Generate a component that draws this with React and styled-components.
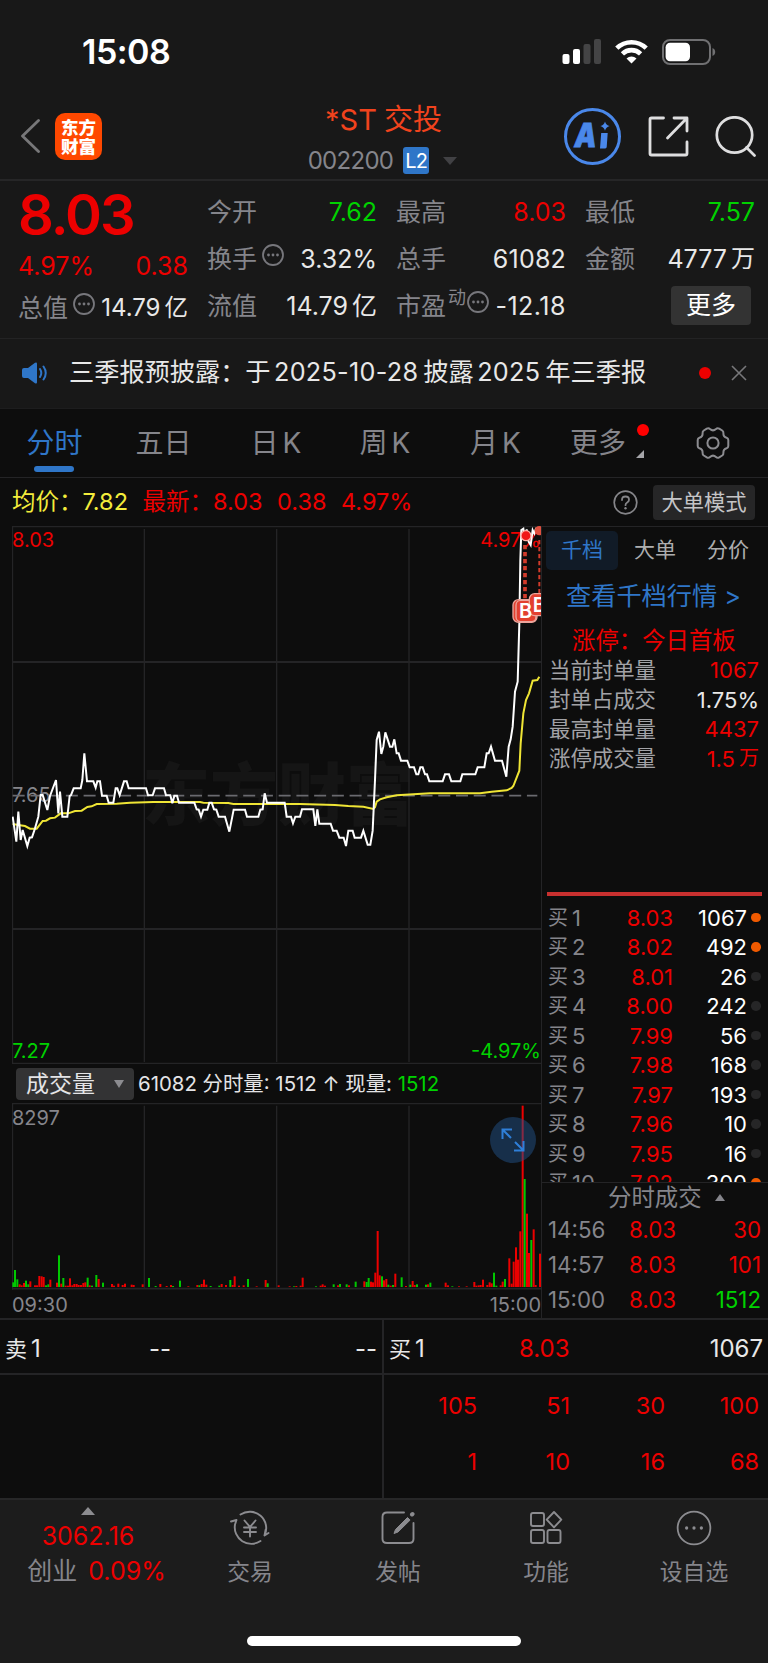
import React from 'react'
import styled, { createGlobalStyle, css } from 'styled-components'

const RED = '#ec0000'
const GREEN = '#00d200'
const BLUE = '#2f76c8'
const GRAY = '#85858b'
const WHITE = '#e8e8e8'
const LINE = '#242426'

const GlobalStyle = createGlobalStyle`
  * {
    box-sizing: border-box;
  }
  body {
    margin: 0;
    background: #0d0d0d;
    color: ${WHITE};
    font-family: Inter, "Noto Sans CJK SC", sans-serif;
    font-weight: 400;
    line-height: 1;
    white-space: nowrap;
  }
  svg {
    display: block;
    flex: none;
  }
`

const Screen = styled.div`
  width: 768px;
  height: 1663px;
  overflow: hidden;
  display: flex;
  flex-direction: column;
`

/* ---------- status bar + header ---------- */

const StatusBar = styled.div`
  height: 102px;
  padding: 1px 52px 0 82px;
  background: #181818;
  display: flex;
  align-items: center;
  justify-content: space-between;
`

const Clock = styled.div`
  font-size: 34px;
  font-weight: 600;
  letter-spacing: -0.5px;
  color: #fff;
`

const SignalGroup = styled.div`
  display: flex;
  align-items: center;
  gap: 14px;
`

const Header = styled.header`
  height: 79px;
  background: #181818;
  border-bottom: 2px solid #262627;
  display: grid;
  grid-template-columns: 300px 168px 300px;
`

const HeaderLeft = styled.div`
  display: flex;
  align-items: center;
  gap: 15px;
  padding: 0 0 9px 21px;
`

const Logo = styled.div`
  width: 47px;
  height: 47px;
  border-radius: 10px;
  background: #ff4800;
  color: #fff;
  font-family: "Noto Sans CJK SC", sans-serif;
  font-weight: 800;
  font-size: 17.5px;
  line-height: 19px;
  text-align: center;
  padding-top: 4px;
  white-space: normal;
`

const HeaderTitle = styled.div`
  display: flex;
  flex-direction: column;
  align-items: center;
`

const Name = styled.div`
  display: flex;
  gap: 7px;
  margin: 3px 0 0 -1px;
  font-size: 29px;
  color: #f1431d;
`

const Code = styled.div`
  display: flex;
  align-items: center;
  gap: 10px;
  margin: 13px 0 0 -3px;
  font-size: 24px;
  letter-spacing: -0.7px;
  color: ${GRAY};
`

const Level = styled.span`
  width: 26px;
  height: 27px;
  margin-right: 4px;
  border-radius: 3px;
  background: ${BLUE};
  color: #fff;
  font-size: 20px;
  line-height: 28px;
  text-align: center;
`

const Arrow = styled.span`
  width: 0;
  height: 0;
  border: ${p => p.w / 2}px solid transparent;
  ${p => p.up
    ? css`border-top: 0; border-bottom: ${p.h}px solid ${p.color};`
    : css`border-bottom: 0; border-top: ${p.h}px solid ${p.color};`}
`

const HeaderRight = styled.div`
  display: flex;
  align-items: center;
  justify-content: flex-end;
  gap: 26.5px;
  padding: 0 12px 9px 0;
`

/* ---------- quote ---------- */

const Quote = styled.section`
  height: 158px;
  background: #181818;
  border-bottom: 1px solid #232324;
  display: grid;
  grid-template-columns: 170px 170px 170px 170px;
  column-gap: 19px;
  padding-left: 18px;
`

const Column = styled.div`
  display: flex;
  flex-direction: column;
  padding-top: 8px;
`

const Price = styled.div`
  height: 52px;
  display: flex;
  align-items: center;
  font-size: 56px;
  font-weight: 600;
  letter-spacing: -2px;
  color: ${RED};
`

const Cell = styled.div`
  height: ${p => p.h || 47}px;
  display: flex;
  align-items: center;
  justify-content: space-between;
  font-size: 25px;
  color: ${GRAY};
`

const Label = styled.span`
  display: flex;
  align-items: center;
  gap: ${p => p.gap || 0}px;
`

const Value = styled.span`
  display: inline-flex;
  gap: 4px;
  font-size: ${p => p.size || 25}px;
  letter-spacing: ${p => p.ls || 0}px;
  color: ${p => p.color || WHITE};
`

const Sup = styled.small`
  font-size: 18px;
  margin: -17px 0 0 1px;
`

const Raised = styled.span`
  margin-top: -9px;
`

const MoreButton = styled.button`
  align-self: flex-end;
  width: 80px;
  height: 39px;
  margin: 3px 4px 0 0;
  padding: 0;
  border: 0;
  border-radius: 4px;
  background: #333;
  color: #fff;
  font: inherit;
  font-size: 25px;
`

const News = styled.section`
  height: 70px;
  background: #181818;
  border-bottom: 1px solid #1d1d1e;
  display: flex;
  align-items: center;
  padding: 0 21px 1px 22px;
`

const NewsText = styled.div`
  flex: 1;
  margin-left: 21px;
  font-size: 25.2px;
  span {
    margin: 0 5px 0 3.5px;
    letter-spacing: 0.3px;
  }
`

const Dot = styled.i`
  width: ${p => p.size}px;
  height: ${p => p.size}px;
  border-radius: 50%;
  background: ${p => p.color};
`

const NewsDot = styled(Dot)`
  margin-right: 20px;
`

/* ---------- period tabs ---------- */

const Tabs = styled.nav`
  height: 69px;
  border-bottom: 1px solid ${LINE};
  display: grid;
  grid-template-columns: 109px 109px 116px 102px 119px 103px 110px;
  justify-items: center;
`

const Tab = styled.div`
  position: relative;
  height: 68px;
  display: flex;
  align-items: center;
  gap: 4px;
  margin-right: ${p => p.shift || 0}px;
  padding-bottom: 1px;
  font-size: 28px;
  color: ${p => (p.active ? BLUE : GRAY)};
  ${p => p.active && css`
    &::after {
      content: '';
      position: absolute;
      left: 8px;
      bottom: 5px;
      width: 40px;
      height: 6px;
      border-radius: 3px;
      background: ${BLUE};
    }
  `}
`

const TabDot = styled(Dot)`
  position: absolute;
  top: 15px;
  right: -23px;
`

const Corner = styled.i`
  position: absolute;
  right: -18px;
  bottom: 19px;
  border-left: 8px solid transparent;
  border-bottom: 8px solid #a5a5a9;
`

const InfoRow = styled.div`
  height: 48px;
  display: flex;
  align-items: center;
  padding: 0 13px 0 12px;
  font-size: 23.5px;
  color: ${RED};
  span {
    margin-right: 14.5px;
  }
`

const Average = styled.span`
  color: #f3ec3b;
`

const Mode = styled.div`
  width: 102px;
  height: 35px;
  margin-left: 15px;
  border-radius: 4px;
  background: #262627;
  color: #c4c4c6;
  font-size: 21.3px;
  line-height: 34px;
  text-align: center;
`

const Spacer = styled.div`
  flex: 1;
`

/* ---------- chart area ---------- */

const Main = styled.main`
  height: 794px;
  display: grid;
  grid-template-columns: 530px 226px;
  padding-left: 12px;
  border-bottom: 2px solid ${LINE};
`

const Charts = styled.div`
  border-right: 1px solid ${LINE};
`

const VolumeHead = styled.div`
  height: 39px;
  display: flex;
  align-items: center;
  padding: 1px 0 0 4px;
  gap: 4px;
  font-size: 20.4px;
  color: #e4e4e6;
`

const Picker = styled.div`
  width: 118px;
  height: 32px;
  padding: 0 10px 0 10px;
  border-radius: 4px;
  background: #333334;
  font-size: 23px;
  display: flex;
  align-items: center;
  justify-content: space-between;
`

const Times = styled.div`
  height: 30px;
  display: flex;
  align-items: center;
  justify-content: space-between;
  font-size: 20px;
  color: ${GRAY};
`

const Side = styled.aside`
  display: flex;
  flex-direction: column;
  border-top: 1px solid ${LINE};
`

const SideTabs = styled.div`
  display: flex;
  gap: 1px;
  margin: 4px 0 0 4px;
`

const SideTab = styled.div`
  width: 72px;
  height: 39px;
  border-radius: 5px;
  font-size: 21px;
  line-height: 38px;
  text-align: center;
  color: ${p => (p.active ? BLUE : '#adadaf')};
  background: ${p => (p.active ? '#111b27' : 'transparent')};
`

const DepthLink = styled.div`
  margin: 13px 0 0 24px;
  height: 26px;
  font-size: 25.2px;
  line-height: 26px;
  color: ${BLUE};
`

const LimitTitle = styled.div`
  margin: 19px 0 2.5px 30px;
  height: 25px;
  font-size: 23.4px;
  line-height: 25px;
  color: ${RED};
`

const Stat = styled.div`
  height: 29.6px;
  display: flex;
  align-items: center;
  justify-content: space-between;
  padding: 0 9px 0 7px;
  font-size: 21.4px;
  color: #a2a2a6;
`

const Divider = styled.div`
  height: 4px;
  margin: 118px 6px 7px 5px;
  background: #c8302f;
`

const Book = styled.div`
  height: 280px;
  overflow: hidden;
  border-bottom: 1px solid ${LINE};
`

const BookRow = styled.div`
  height: 29.5px;
  display: grid;
  grid-template-columns: 50px 75px 74px 10px;
  align-items: center;
  padding-left: 6px;
  font-size: 22px;
  color: ${GRAY};
  > :nth-child(2), > :nth-child(3) {
    justify-self: end;
  }
  > :nth-child(4) {
    margin-left: 4px;
  }
`

const Rank = styled.span`
  display: flex;
  align-items: center;
  gap: 4px;
`

const Hanzi = styled.span`
  font-size: ${p => p.size || 20}px;
`

const TickHead = styled.div`
  height: 30px;
  display: flex;
  align-items: center;
  gap: 13px;
  padding-left: 66px;
  font-size: 23.4px;
  color: ${GRAY};
`

const Tick = styled.div`
  height: 35px;
  display: grid;
  grid-template-columns: 60px 68px 85px;
  align-items: center;
  padding-left: 6px;
  font-size: 22.3px;
  color: ${GRAY};
  > * {
    justify-self: end;
  }
`

/* ---------- order queue ---------- */

const Queue = styled.section`
  height: 178px;
  display: grid;
  grid-template-columns: 384px 384px;
  grid-template-rows: 55px 123px;
`

const QueueCell = styled.div`
  border-right: ${p => (p.left ? `2px solid ${LINE}` : '0')};
  border-bottom: ${p => (p.head ? `2px solid ${LINE}` : '0')};
`

const QueueHead = styled(QueueCell)`
  display: grid;
  grid-template-columns: ${p => p.cols};
  align-items: center;
  padding: 4px 5px 0 5px;
  font-size: 24px;
  > :last-child {
    justify-self: end;
  }
`

const Lots = styled(QueueCell)`
  display: grid;
  grid-template-columns: 93px 93px 95px 94px;
  grid-template-rows: 56px 56px;
  justify-items: end;
  align-items: center;
  padding-top: 3px;
  font-size: 23.5px;
  color: ${RED};
`

/* ---------- bottom bar ---------- */

const BottomBar = styled.footer`
  flex: 1;
  background: #1c1c1c;
  border-top: 2px solid #272728;
  display: flex;
  flex-direction: column;
  align-items: center;
`

const Actions = styled.div`
  width: 768px;
  height: 136px;
  display: grid;
  grid-template-columns: 176px 148px 148px 148px 148px;
`

const Action = styled.div`
  display: flex;
  flex-direction: column;
  align-items: center;
  padding-top: 10px;
  font-size: 22.8px;
  color: ${GRAY};
  svg {
    margin-bottom: 15px;
  }
`

const IndexBox = styled.div`
  display: flex;
  flex-direction: column;
  align-items: center;
  padding-top: 7px;
  font-size: 25px;
  color: ${RED};
`

const IndexValue = styled.div`
  margin-top: 9px;
`

const IndexRow = styled.div`
  display: flex;
  gap: 11px;
  margin: 10px 0 0 17px;
`

const HomeIndicator = styled.div`
  width: 274px;
  height: 10px;
  border-radius: 5px;
  background: #fff;
`

/* ---------- icons ---------- */

const SignalIcon = () => (
  <svg width="39" height="25" viewBox="0 0 39 25">
    <rect x="0.5" y="15" width="7" height="10" rx="2" fill="#fff" />
    <rect x="11" y="10" width="7" height="15" rx="2" fill="#fff" />
    <rect x="21.5" y="5" width="7" height="20" rx="2" fill="#444445" />
    <rect x="32" y="0" width="7" height="25" rx="2" fill="#444445" />
  </svg>
)

const WifiIcon = () => (
  <svg width="33" height="25" viewBox="0 0 33 25">
    <g fill="none" stroke="#fff" strokeWidth="4.6">
      <path d="M1.8 9.2a21 21 0 0 1 29.4 0" />
      <path d="M7.4 14.8a13 13 0 0 1 18.2 0" />
    </g>
    <path d="M16.5 24.6l-5-5a7.3 7.3 0 0 1 10 0z" fill="#fff" />
  </svg>
)

const BatteryIcon = () => (
  <svg width="54" height="26" viewBox="0 0 54 26">
    <rect x="1" y="1" width="47" height="24" rx="7" fill="none" stroke="#707072" strokeWidth="2" />
    <rect x="3.6" y="3.8" width="24.4" height="18.4" rx="4.5" fill="#fff" />
    <path d="M50.5 9c3.6 1.2 3.6 6.8 0 8z" fill="#707072" />
  </svg>
)

const BackIcon = () => (
  <svg width="19" height="34" viewBox="0 0 19 34">
    <path d="M17.5 1.5L1.5 17l16 15.5" fill="none" stroke="#777779" strokeWidth="2.8" strokeLinecap="round" strokeLinejoin="round" />
  </svg>
)

const AiIcon = () => (
  <svg width="57" height="57" viewBox="0 0 57 57">
    <circle cx="28.5" cy="28.5" r="27" fill="none" stroke="#4a88ea" strokeWidth="3" />
    <text x="10.5" y="39" fontFamily="Inter" fontWeight="900" fontStyle="italic" fontSize="33" textLength="22" lengthAdjust="spacingAndGlyphs" stroke="#4a88ea" strokeWidth="0.8" fill="#4a88ea">A</text>
    <path d="M37.2 25h6.5l-1 14q-.1 1.400-1.500 1.400h-5.200z" fill="#4a88ea" />
    <path d="M41 13.500q1 3.800 4.600 4.600q-3.600 1-4.600 4.600q-1-3.600-4.600-4.600q3.600-.8 4.600-4.600z" fill="#4a88ea" />
  </svg>
)

const ShareIcon = () => (
  <svg width="41" height="41" viewBox="0 0 41 41">
    <g fill="none" stroke="#dededf" strokeWidth="2.8" strokeLinecap="round" strokeLinejoin="round">
      <path d="M15.5 2H3.5q-1.500 0-1.500 1.500v34q0 1.500 1.500 1.500h34q1.500 0 1.500-1.500V26" />
      <path d="M26 2h13v13M38.500 2.500L19.500 22" />
    </g>
  </svg>
)

const SearchIcon = () => (
  <svg width="41" height="41" viewBox="0 0 41 41">
    <g fill="none" stroke="#dededf" strokeWidth="2.7" strokeLinecap="round">
      <circle cx="19.5" cy="19" r="17.7" />
      <path d="M31.5 31.5l8 8" />
    </g>
  </svg>
)

const DotsIcon = ({ size = 22, sw = 1.8, r = 1.4, color = '#77777c' }) => (
  <svg width={size} height={size} viewBox="0 0 22 22">
    <circle cx="11" cy="11" r="10" fill="none" stroke={color} strokeWidth={sw} />
    <g fill={color}>
      <circle cx="6.5" cy="11" r={r} />
      <circle cx="11" cy="11" r={r} />
      <circle cx="15.5" cy="11" r={r} />
    </g>
  </svg>
)

const SpeakerIcon = () => (
  <svg width="26" height="22" viewBox="0 0 26 22">
    <path d="M2 6h4l7-5.200q2-1 2 1v18.400q0 2-2 1L6 16H2q-2 0-2-2V8q0-2 2-2z" fill={BLUE} />
    <g fill="none" stroke={BLUE} strokeWidth="2" strokeLinecap="round">
      <path d="M18 7q2.600 4 0 8M21.500 4.500q4.500 6.500 0 13" />
    </g>
  </svg>
)

const CloseIcon = () => (
  <svg width="16" height="16" viewBox="0 0 16 16">
    <path d="M1 1l14 14M15 1L1 15" stroke="#77777a" strokeWidth="1.6" />
  </svg>
)

const GearIcon = () => (
  <svg width="34" height="34" viewBox="0 0 34 34">
    <g fill="none" stroke="#8c8c90" strokeWidth="2" strokeLinejoin="round">
      <path d="M10.800 2.600q1.800-1 3.200.4q3 2.800 6 0q1.400-1.400 3.200-.4l3 1.900q1.400 1 1.200 2.700q-.2 3.600 3.200 4.600q1.700.6 1.700 2.200v6q0 1.600-1.700 2.200q-3.400 1-3.200 4.600q.2 1.700-1.200 2.700l-3 1.900q-1.800 1-3.200-.4q-3-2.800-6 0q-1.400 1.400-3.200.4l-3-1.900q-1.400-1-1.200-2.700q.2-3.600-3.200-4.600q-1.700-.6-1.700-2.200v-6q0-1.600 1.700-2.200q3.400-1 3.200-4.600q-.2-1.700 1.200-2.700z" />
      <circle cx="17" cy="17" r="5.600" />
    </g>
  </svg>
)

const HelpIcon = () => (
  <svg width="25" height="25" viewBox="0 0 25 25">
    <circle cx="12.5" cy="12.5" r="11.3" fill="none" stroke="#858589" strokeWidth="1.7" />
    <path d="M9 10q0-3.500 3.500-3.500t3.500 3.200q0 1.700-1.800 2.800q-1.700 1-1.700 2.700" fill="none" stroke="#858589" strokeWidth="1.8" strokeLinecap="round" />
    <circle cx="12.5" cy="18.200" r="1.200" fill="#858589" />
  </svg>
)

const TradeIcon = () => (
  <svg width="40" height="36" viewBox="0 0 40 36">
    <g fill="none" stroke="#8c8c90" strokeWidth="1.9" strokeLinecap="round" strokeLinejoin="round">
      <path d="M10.500 4.500A16.500 16.500 0 0 1 34.500 25.500l4-2.500M34.500 25.500l1.200-6" />
      <path d="M1 11.500l5.500-1.500l-1.500 4.500A16.500 16.500 0 0 0 30.500 31" />
      <path d="M14.500 10.500l5.500 6.500l5.500-6.500M20 17V26.500M14 17.500h12M14 22h12" />
    </g>
  </svg>
)

const PostIcon = () => (
  <svg width="34" height="36" viewBox="0 0 34 36">
    <g fill="none" stroke="#8c8c90" strokeWidth="1.9" strokeLinecap="round">
      <path d="M23 2.500H6Q1.500 2.500 1.500 7v22q0 4 4.500 4h22q4.500 0 4.500-4V13" />
      <path d="M31 4.500l.5-.5" strokeWidth="4" />
    </g>
    <path d="M13 23.500l1.500-4L26.500 7.500l2.600 2.600L17 22z" fill="#8c8c90" stroke="#8c8c90" strokeLinejoin="round" />
  </svg>
)

const GridIcon = () => (
  <svg width="34" height="36" viewBox="0 0 34 36">
    <g fill="none" stroke="#8c8c90" strokeWidth="1.9" strokeLinejoin="round">
      <rect x="2" y="3" width="13" height="13" rx="2" />
      <rect x="2" y="20" width="13" height="13" rx="2" />
      <rect x="18.5" y="20" width="13" height="13" rx="2" />
      <path d="M25 2l7.300 7.700L25 17.400l-7.300-7.700z" />
    </g>
  </svg>
)

/* ---------- charts ---------- */

const ChartBox = styled.div`
  position: relative;
  height: ${p => p.h}px;
`

const Plot = styled.svg`
  position: relative;
`

const ChartText = styled.span`
  position: absolute;
  font-size: 20px;
  color: ${p => p.color};
  ${p => (p.right ? 'right: 0;' : 'left: 0;')}
  top: ${p => p.top}px;
`

const Watermark = styled.div`
  position: absolute;
  left: 130px;
  top: 235px;
  font-size: 68px;
  font-weight: 900;
  color: #151515;
`

const Expand = styled.div`
  position: absolute;
  left: 478px;
  top: 14px;
  width: 46px;
  height: 46px;
  border-radius: 50%;
  background: rgba(34, 82, 136, 0.5);
  display: grid;
  place-items: center;
`

// three units per pixel
const PRICE_LINE = `
38,890 49,965 55,875 62,960 68,930 82,978 89,953 96,952 105,925 115,890 122,825 128,825
142,870 150,828 168,780 175,880 180,815 187,890 202,890 209,828 213,825 221,805 242,805
247,780 253,700 261,784 280,784 287,803 292,784 300,784 306,827 320,827 326,848 340,848
347,805 352,805 359,825 372,784 380,784 386,805 438,805 444,826 458,826 465,805 492,805
498,826 511,826 517,850 523,827 531,827 537,848 583,848 590,868 596,869 603,890 610,869
622,869 628,848 635,848 642,868 649,869 656,890 675,890 688,935 701,869 735,869 741,890
775,890 781,869 788,868 794,820 801,848 854,848 860,890 873,890 879,910 886,890 900,890
906,868 940,868 946,918 952,868 958,911 992,911 999,932 1010,932 1018,953 1031,953
1038,978 1045,932 1058,932 1064,953 1083,953 1090,932 1103,974 1111,974 1118,932 1125,780
1130,660 1137,635 1144,702 1150,680 1156,637 1170,680 1177,680 1183,658 1190,700 1196,700
1203,722 1222,722 1229,742 1242,742 1249,763 1255,763 1261,742 1268,742 1275,763 1281,763
1288,784 1328,784 1335,763 1347,763 1354,784 1381,784 1387,763 1426,763 1433,742 1453,742
1460,700 1466,700 1473,680 1485,722 1506,722 1519,770 1526,680 1532,658 1538,620 1545,515
1553,485 1558,310 1561,120 1564,30 1570,26 1575,62 1580,28 1586,65 1592,75 1598,30 1603,40
1608,26 1624,24`

const AVG_LINE = `
38,912 55,915 75,918 90,926 110,926 128,903 138,902 150,895 165,893 182,880 205,880
225,873 245,872 262,861 275,859 290,852 350,851 390,848 460,846 600,846 610,848 685,849
700,852 900,852 1005,855 1045,858 1090,860 1120,867 1125,862 1130,845 1140,838 1160,832
1190,826 1290,820 1440,820 1475,815 1520,811 1535,804 1540,798 1558,752 1562,670
1570,580 1578,540 1587,520 1598,482 1612,480 1618,470`

const PriceChart = () => (
  <ChartBox h={538}>
    <Watermark>东方财富</Watermark>
    <ChartText color={RED} top={3.5}>8.03</ChartText>
    <ChartText color={RED} top={3.5} right>4.97%</ChartText>
    <ChartText color={GRAY} top={259}>7.65</ChartText>
    <ChartText color={GREEN} top={515}>7.27</ChartText>
    <ChartText color={GREEN} top={515} right>-4.97%</ChartText>
    <Plot width="529" height="538" viewBox="36 18 1587 1614">
      <g stroke={LINE} strokeWidth="4" fill="none">
        <path d="M36 20H1623M36 1630H1623" />
        <path d="M36 426H1623M36 1227H1623" strokeWidth="6" />
        <path d="M37.500 18V1632M433 27V1626M830 27V1626M1227 27V1626" />
      </g>
      <path d="M38 827H1612" stroke="#6a6a6f" strokeWidth="5" strokeDasharray="36 17.200" />
      <polyline points={AVG_LINE} fill="none" stroke="#efe535" strokeWidth="6" />
      <polyline points={PRICE_LINE} fill="none" stroke="#fff" strokeWidth="6" />
      <path d="M1575 75V240" stroke="#d23b2b" strokeWidth="11" strokeDasharray="13 8" />
      <path d="M1618 60V225" stroke="#d23b2b" strokeWidth="6" strokeDasharray="13 8" />
      <circle cx="1578" cy="47" r="15" fill="#f01818" stroke="#ffb0a8" strokeWidth="4" />
      <circle cx="1618" cy="32" r="14" fill="#e0503f" />
      <g fill="#e2402f" stroke="#eba59c" strokeWidth="4">
        <rect x="1539" y="239" width="72" height="68" rx="16" />
        <rect x="1548" y="241" width="60" height="64" rx="14" />
        <rect x="1588" y="221" width="70" height="66" rx="16" />
      </g>
      <g fill="#fff" fontFamily="Inter" fontSize="60" fontWeight="600">
        <text x="1557" y="294">B</text>
        <text x="1598" y="275">B</text>
      </g>
    </Plot>
  </ChartBox>
)

// [x, height, up]
const BARS = [
  [40, 14, 0], [45, 51, 0], [52, 23, 0], [59, 8, 1], [65, 5, 1], [72, 12, 1], [78, 19, 0], [85, 8, 0],
  [91, 17, 1], [105, 5, 1], [111, 5, 1], [118, 33, 1], [125, 32, 1], [131, 30, 1], [138, 5, 0], [145, 8, 0],
  [151, 22, 1], [171, 13, 1], [177, 95, 0], [184, 10, 1], [190, 27, 0], [197, 4, 1], [204, 4, 1], [210, 26, 1],
  [217, 5, 1], [223, 9, 1], [230, 9, 1], [236, 6, 1], [243, 6, 1], [250, 12, 1], [256, 14, 1], [263, 28, 0],
  [269, 5, 1], [276, 4, 0], [289, 36, 0], [296, 24, 1], [309, 13, 0], [336, 9, 1], [342, 4, 1], [355, 10, 1],
  [368, 6, 1], [375, 10, 1], [395, 7, 1], [401, 6, 1], [428, 8, 1], [447, 27, 0], [467, 3, 0], [481, 9, 1],
  [500, 3, 1], [513, 6, 1], [519, 3, 0], [540, 19, 0], [565, 2, 1], [592, 6, 1], [598, 5, 0], [605, 9, 1],
  [612, 22, 1], [619, 7, 1], [632, 3, 0], [658, 4, 0], [665, 9, 1], [678, 6, 1], [691, 21, 0], [698, 6, 1],
  [704, 32, 1], [717, 4, 1], [731, 5, 1], [744, 24, 0], [770, 2, 1], [797, 21, 1], [803, 11, 0], [836, 5, 1],
  [869, 2, 1], [882, 2, 0], [889, 3, 1], [902, 4, 1], [908, 28, 1], [948, 2, 0], [962, 4, 1], [968, 8, 1],
  [975, 4, 1], [1001, 8, 0], [1014, 5, 1], [1020, 9, 0], [1040, 8, 0], [1047, 5, 1], [1067, 16, 0], [1093, 17, 1],
  [1100, 15, 0], [1106, 27, 0], [1113, 16, 1], [1119, 14, 1], [1126, 43, 1], [1133, 168, 1], [1139, 35, 1],
  [1146, 32, 0], [1152, 20, 1], [1159, 24, 1], [1165, 7, 0], [1172, 4, 1], [1179, 6, 0], [1186, 40, 1],
  [1205, 29, 0], [1218, 3, 1], [1231, 7, 0], [1238, 18, 1], [1244, 6, 1], [1251, 8, 0], [1278, 7, 0], [1284, 8, 1],
  [1291, 13, 0], [1337, 13, 1], [1344, 5, 1], [1357, 2, 0], [1377, 2, 1], [1400, 2, 1], [1423, 15, 1],
  [1429, 4, 1], [1436, 5, 1], [1442, 6, 1], [1449, 22, 1], [1462, 6, 1], [1469, 14, 1], [1475, 11, 1],
  [1482, 43, 0], [1489, 4, 0], [1502, 5, 1], [1508, 16, 1], [1515, 24, 0], [1528, 86, 1], [1535, 10, 1],
  [1541, 76, 1], [1548, 119, 1], [1554, 82, 1], [1561, 167, 1], [1568, 544, 1], [1574, 324, 0], [1581, 220, 1],
  [1587, 102, 1], [1594, 141, 0], [1601, 173, 1], [1607, 6, 1], [1620, 100, 1],
]

const VolumeChart = () => (
  <ChartBox h={187}>
    <Plot width="529" height="187" viewBox="36 0 1587 561">
      <g stroke={LINE} strokeWidth="5" fill="none">
        <path d="M36 1H1623M36 557H1623" />
        <path d="M37.500 0V560M433 8V554M830 8V554M1227 8V554" strokeWidth="4" />
      </g>
      {BARS.map(([x, h, up]) => (
        <rect key={x} x={x - 3} y={552 - h} width="6" height={h} fill={up ? RED : '#00c800'} />
      ))}
    </Plot>
    <ChartText color={GRAY} top={5}>8297</ChartText>
    <Expand>
      <svg width="24" height="24" viewBox="0 0 24 24">
        <path d="M1.500 11V1.500H11M1.500 1.500l8.500 8.500M22.500 13v9.500H13M22.500 22.500l-8.500-8.500" fill="none" stroke="#2f7fd8" strokeWidth="2" />
      </svg>
    </Expand>
  </ChartBox>
)

/* ---------- data ---------- */

const stats = [
  ['当前封单量', '1067', '', RED],
  ['封单占成交', '1.75%', '', WHITE],
  ['最高封单量', '4437', '', RED],
  ['涨停成交量', '1.5', '万', RED],
]

const bids = [
  ['8.03', 1067, true], ['8.02', 492, true], ['8.01', 26], ['8.00', 242], ['7.99', 56],
  ['7.98', 168], ['7.97', 193], ['7.96', 10], ['7.95', 16], ['7.92', 300, true],
]

const ticks = [
  ['14:56', '8.03', 30, RED],
  ['14:57', '8.03', 101, RED],
  ['15:00', '8.03', 1512, GREEN],
]

const lots = [105, 51, 30, 100, 1, 10, 16, 68]

const App = () => (
  <>
    <GlobalStyle />
    <Screen>
      <StatusBar>
        <Clock>15:08</Clock>
        <SignalGroup>
          <SignalIcon />
          <WifiIcon />
          <BatteryIcon />
        </SignalGroup>
      </StatusBar>

      <Header>
        <HeaderLeft>
          <BackIcon />
          <Logo>东方<br />财富</Logo>
        </HeaderLeft>
        <HeaderTitle>
          <Name>*ST<span>交投</span></Name>
          <Code>
            002200<Level>L2</Level>
            <Arrow w={14} h={8} color="#414144" />
          </Code>
        </HeaderTitle>
        <HeaderRight>
          <AiIcon />
          <ShareIcon />
          <SearchIcon />
        </HeaderRight>
      </Header>

      <Quote>
        <Column>
          <Price>8.03</Price>
          <Cell h={50}>
            <Value color={RED}>4.97%</Value>
            <Value color={RED}>0.38</Value>
          </Cell>
          <Cell h={34}>
            <Label gap={5}>总值<Raised><DotsIcon /></Raised></Label>
            <Value size={24}>14.79<Hanzi size={23.5}>亿</Hanzi></Value>
          </Cell>
        </Column>
        <Column>
          <Cell><Label>今开</Label><Value color={GREEN}>7.62</Value></Cell>
          <Cell>
            <Label gap={5}>换手<Raised><DotsIcon /></Raised></Label>
            <Value>3.32%</Value>
          </Cell>
          <Cell><Label>流值</Label><Value>14.79<Hanzi size={25}>亿</Hanzi></Value></Cell>
        </Column>
        <Column>
          <Cell><Label>最高</Label><Value color={RED}>8.03</Value></Cell>
          <Cell><Label>总手</Label><Value ls={0.2}>61082</Value></Cell>
          <Cell>
            <Label gap={1}>市盈<Sup>动</Sup><Raised><DotsIcon /></Raised></Label>
            <Value ls={0.5}>-12.18</Value>
          </Cell>
        </Column>
        <Column>
          <Cell><Label>最低</Label><Value color={GREEN}>7.57</Value></Cell>
          <Cell><Label>金额</Label><Value>4777<Hanzi size={24}>万</Hanzi></Value></Cell>
          <MoreButton>更多</MoreButton>
        </Column>
      </Quote>

      <News>
        <SpeakerIcon />
        <NewsText>三季报预披露：于<span>2025-10-28</span>披露<span>2025</span>年三季报</NewsText>
        <NewsDot size={12} color={RED} />
        <CloseIcon />
      </News>

      <Tabs>
        <Tab active>分时</Tab>
        <Tab>五日</Tab>
        <Tab>日<span>K</span></Tab>
        <Tab>周<span>K</span></Tab>
        <Tab>月<span>K</span></Tab>
        <Tab shift={17}>
          更多
          <TabDot size={12} color="#ff0000" />
          <Corner />
        </Tab>
        <Tab><GearIcon /></Tab>
      </Tabs>

      <InfoRow>
        <Average>均价：7.82</Average>
        <span>最新：8.03</span>
        <span>0.38</span>
        <span>4.97%</span>
        <Spacer />
        <HelpIcon />
        <Mode>大单模式</Mode>
      </InfoRow>

      <Main>
        <Charts>
          <PriceChart />
          <VolumeHead>
            <Picker>成交量<Arrow w={10} h={8} color="#8c8c90" /></Picker>
            <div>61082 分时量: 1512 ↑ 现量: <Value size={20.4} color={GREEN}>1512</Value></div>
          </VolumeHead>
          <VolumeChart />
          <Times><span>09:30</span><span>15:00</span></Times>
        </Charts>

        <Side>
          <SideTabs>
            <SideTab active>千档</SideTab>
            <SideTab>大单</SideTab>
            <SideTab>分价</SideTab>
          </SideTabs>
          <DepthLink>查看千档行情 &gt;</DepthLink>
          <LimitTitle>涨停：今日首板</LimitTitle>
          {stats.map(([label, value, unit, color]) => (
            <Stat key={label}>
              {label}
              <Value size={22} color={color}>{value}{unit && <Hanzi>{unit}</Hanzi>}</Value>
            </Stat>
          ))}
          <Divider />
          <Book>
            {bids.map(([price, qty, hot], i) => (
              <BookRow key={price}>
                <Rank><Hanzi>买</Hanzi>{i + 1}</Rank>
                <Value size={22} color={RED}>{price}</Value>
                <Value size={22} color="#fff">{qty}</Value>
                <Dot size={9.5} color={hot ? '#f05a00' : '#262627'} />
              </BookRow>
            ))}
          </Book>
          <TickHead>分时成交<Arrow up w={10} h={7} color="#85858b" /></TickHead>
          {ticks.map(([time, price, qty, color]) => (
            <Tick key={time}>
              <Time>{time}</Time>
              <Value size={22.3} color={RED}>{price}</Value>
              <Value size={22.3} color={color}>{qty}</Value>
            </Tick>
          ))}
        </Side>
      </Main>

      <Queue>
        <QueueHead left head cols="144px 1fr 1fr">
          <Rank><Hanzi size={22}>卖</Hanzi>1</Rank>
          <span>--</span>
          <span>--</span>
        </QueueHead>
        <QueueHead head cols="130px 1fr 1fr">
          <Rank><Hanzi size={22}>买</Hanzi>1</Rank>
          <Value size={24} color={RED}>8.03</Value>
          <span>1067</span>
        </QueueHead>
        <QueueCell left />
        <Lots>
          {lots.map(n => <span key={n}>{n}</span>)}
        </Lots>
      </Queue>

      <BottomBar>
        <Actions>
          <IndexBox>
            <Arrow up w={14} h={8} color="#8c8c90" />
            <IndexValue>3062.16</IndexValue>
            <IndexRow>
              <Value size={25} color={GRAY}>创业</Value>
              0.09%
            </IndexRow>
          </IndexBox>
          <Action><TradeIcon />交易</Action>
          <Action><PostIcon />发帖</Action>
          <Action><GridIcon />功能</Action>
          <Action><DotsIcon size={36} sw={1.1} r={1} color="#8c8c90" />设自选</Action>
        </Actions>
        <HomeIndicator />
      </BottomBar>
    </Screen>
  </>
)

const Time = styled.span`
  && {
    justify-self: start;
  }
`

export default App
